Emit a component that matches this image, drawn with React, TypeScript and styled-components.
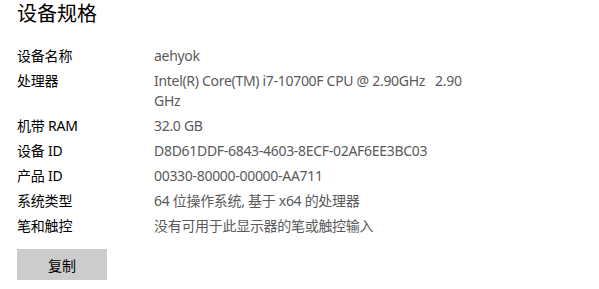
import React from "react";
import styled, { createGlobalStyle } from "styled-components";

const Global = createGlobalStyle`
  html, body { margin: 0; padding: 0; background: #ffffff; }
  body {
    font-family: "Noto Sans", "Noto Sans CJK SC", sans-serif;
    -webkit-font-smoothing: antialiased;
  }
`;

const Page = styled.div`
  width: 599px;
  height: 289px;
  box-sizing: border-box;
  padding: 0 0 0 17px;
  overflow: hidden;
  background: #fff;
`;

const Title = styled.h2`
  margin: 0 0 19px 0;
  font-size: 20px;
  line-height: 27px;
  font-weight: 400;
  color: #000;
`;

const Specs = styled.dl`
  margin: 0;
  display: grid;
  grid-template-columns: 137px 318px;
  row-gap: 5px;
`;

const Label = styled.dt`
  margin: 0;
  font-size: 14px;
  line-height: 20px;
  letter-spacing: -0.2px;
  color: #000;
`;

const Value = styled.dd`
  margin: 0;
  font-size: 14px;
  line-height: 20px;
  letter-spacing: -0.3px;
  color: #5a5a5a;
`;

const CopyButton = styled.button`
  margin-top: 13px;
  width: 90px;
  height: 31px;
  border: none;
  background: #cccccc;
  color: #000;
  font-family: inherit;
  font-size: 14px;
  padding: 0;
  cursor: pointer;
`;

const specs: [string, string][] = [
  ["设备名称", "aehyok"],
  ["处理器", "Intel(R) Core(TM) i7-10700F CPU @ 2.90GHz\u00a0\u00a0 2.90 GHz"],
  ["机带 RAM", "32.0 GB"],
  ["设备 ID", "D8D61DDF-6843-4603-8ECF-02AF6EE3BC03"],
  ["产品 ID", "00330-80000-00000-AA711"],
  ["系统类型", "64 位操作系统, 基于 x64 的处理器"],
  ["笔和触控", "没有可用于此显示器的笔或触控输入"],
];

export default function App() {
  return (
    <Page>
      <Global />
      <Title>设备规格</Title>
      <Specs>
        {specs.map(([k, v]) => (
          <React.Fragment key={k}>
            <Label>{k}</Label>
            <Value>{v}</Value>
          </React.Fragment>
        ))}
      </Specs>
      <CopyButton>复制</CopyButton>
    </Page>
  );
}
